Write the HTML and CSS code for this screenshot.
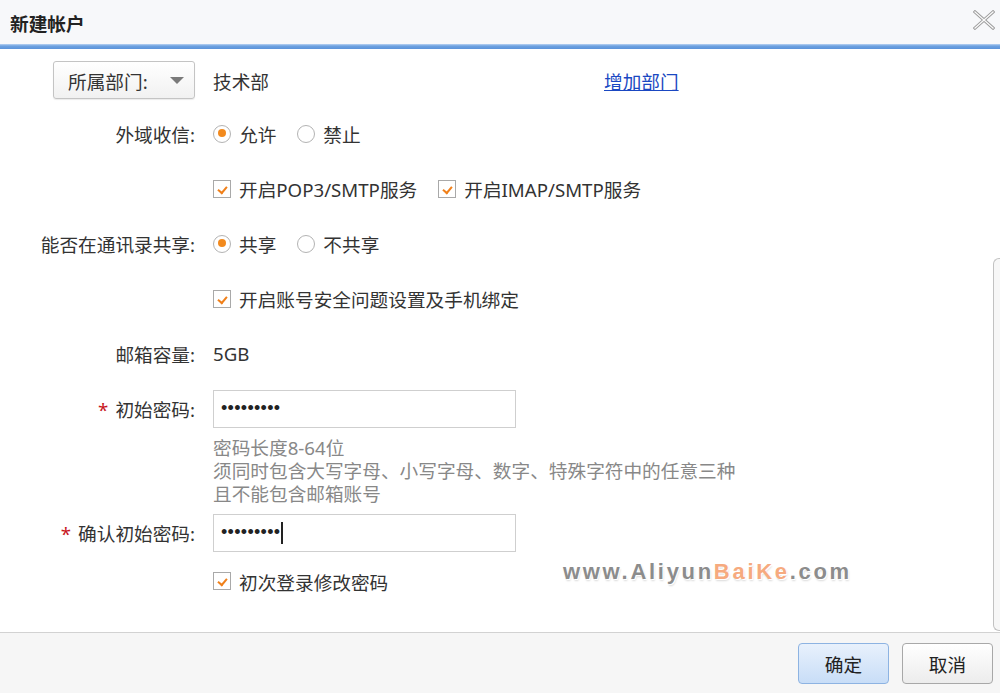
FILE: index.html
```html
<!DOCTYPE html>
<html lang="zh-CN">
<head>
    <meta charset="UTF-8">
    <title>新建帐户</title>
    <link rel="stylesheet" href="styles.css">
</head>
<body>
    <div class="dialog">
        <div class="dialog-header">
            <h1 class="dialog-title">新建帐户</h1>
            <svg class="close-icon" width="22" height="20" viewBox="0 0 22 20">
                <path d="M2 2 L20 18 M20 2 L2 18" stroke="#9a9a9a" stroke-width="3.2" stroke-linecap="square" fill="none"/>
                <path d="M2 2 L20 18 M20 2 L2 18" stroke="#fafafa" stroke-width="1.3" stroke-linecap="square" fill="none"/>
            </svg>
        </div>
        <div class="header-line"></div>

        <div class="dialog-body">
            <div class="row row-first">
                <div class="label-col">
                    <div class="dept-select">
                        <span>所属部门:</span>
                        <span class="caret"></span>
                    </div>
                </div>
                <div class="value-col">
                    <span class="dept-name">技术部</span>
                    <a href="#" class="link">增加部门</a>
                </div>
            </div>

            <div class="row">
                <div class="label-col">外域收信:</div>
                <div class="value-col">
                    <label class="option"><span class="radio checked"></span>允许</label>
                    <label class="option"><span class="radio"></span>禁止</label>
                </div>
            </div>

            <div class="row">
                <div class="label-col"></div>
                <div class="value-col">
                    <label class="option"><span class="checkbox"></span>开启POP3/SMTP服务</label>
                    <label class="option"><span class="checkbox"></span>开启IMAP/SMTP服务</label>
                </div>
            </div>

            <div class="row">
                <div class="label-col">能否在通讯录共享:</div>
                <div class="value-col">
                    <label class="option"><span class="radio checked"></span>共享</label>
                    <label class="option"><span class="radio"></span>不共享</label>
                </div>
            </div>

            <div class="row">
                <div class="label-col"></div>
                <div class="value-col">
                    <label class="option"><span class="checkbox"></span>开启账号安全问题设置及手机绑定</label>
                </div>
            </div>

            <div class="row">
                <div class="label-col">邮箱容量:</div>
                <div class="value-col">5GB</div>
            </div>

            <div class="row">
                <div class="label-col"><span class="required">*</span>初始密码:</div>
                <div class="value-col">
                    <div class="text-input"><span class="dots">•••••••••</span></div>
                </div>
            </div>

            <div class="hint">
                <p>密码长度8-64位</p>
                <p>须同时包含大写字母、小写字母、数字、特殊字符中的任意三种</p>
                <p>且不能包含邮箱账号</p>
            </div>

            <div class="row">
                <div class="label-col"><span class="required">*</span>确认初始密码:</div>
                <div class="value-col">
                    <div class="text-input"><span class="dots">•••••••••</span><span class="text-caret"></span></div>
                </div>
            </div>

            <div class="row row-last">
                <div class="label-col"></div>
                <div class="value-col">
                    <label class="option"><span class="checkbox"></span>初次登录修改密码</label>
                </div>
            </div>

            <div class="watermark">www.Aliyun<span class="wm-accent">BaiKe</span>.com</div>
            <div class="scroll-thumb"></div>
        </div>

        <div class="dialog-footer">
            <button class="btn btn-primary">确定</button>
            <button class="btn">取消</button>
        </div>
    </div>
</body>
</html>
```

FILE: styles.css
```css
* {
    margin: 0;
    padding: 0;
    box-sizing: border-box;
}

body {
    font-family: "Noto Sans", "Noto Sans CJK SC", sans-serif;
    font-size: 18.67px;
    color: #333;
    background: #fff;
    width: 1000px;
    height: 693px;
    overflow: hidden;
}

.dialog {
    display: flex;
    flex-direction: column;
    height: 693px;
}

.dialog-header {
    height: 44px;
    background: #f7f8fa;
    display: flex;
    align-items: center;
    justify-content: space-between;
    padding: 0 5px 0 10px;
}

.dialog-title {
    font-size: 18.67px;
    font-weight: bold;
    color: #222;
    font-family: "Noto Sans CJK SC", sans-serif;
}

.close-icon {
    margin-top: -4px;
}

.header-line {
    height: 5px;
    background: linear-gradient(to bottom, #b9d3f2 0%, #6ea2e0 40%, #5b93da 100%);
}

.dialog-body {
    position: relative;
    height: 583px;
    padding-top: 12px;
    overflow: hidden;
}

.row {
    display: grid;
    grid-template-columns: 195px 1fr;
    column-gap: 18px;
    height: 55px;
    align-items: center;
}

.row-first {
    height: 38px;
    margin-bottom: 7px;
}

.row-last {
    height: 42px;
}

.label-col {
    text-align: right;
    white-space: nowrap;
}

.value-col {
    display: flex;
    align-items: center;
    white-space: nowrap;
}

.dept-select {
    display: inline-flex;
    align-items: center;
    justify-content: space-between;
    width: 142px;
    height: 38px;
    padding: 0 10px 0 14px;
    border: 1px solid #c4c4c4;
    border-radius: 3px;
    background: linear-gradient(to bottom, #ffffff 0%, #f1f1f1 100%);
    box-shadow: 0 1px 1px rgba(0, 0, 0, 0.08);
}

.caret {
    width: 0;
    height: 0;
    border-left: 7px solid transparent;
    border-right: 7px solid transparent;
    border-top: 7px solid #7a7a7a;
}

.dept-name {
    width: 391px;
}

.link {
    color: #1a48c2;
    text-decoration: underline;
}

.option {
    display: inline-flex;
    align-items: center;
    margin-right: 21px;
}

.radio {
    position: relative;
    width: 18px;
    height: 18px;
    margin-right: 8px;
    border: 1.5px solid #b3b3b3;
    border-radius: 50%;
    background: #fff;
}

.radio.checked::after {
    content: "";
    position: absolute;
    left: 3.5px;
    top: 3.5px;
    width: 8px;
    height: 8px;
    border-radius: 50%;
    background: #f28a1e;
}

.checkbox {
    position: relative;
    width: 18px;
    height: 18px;
    margin-right: 8px;
    border: 1.5px solid #a9a9a9;
    background: #fff;
}

.checkbox::after {
    content: "";
    position: absolute;
    left: 4px;
    top: 2px;
    width: 7px;
    height: 4px;
    border-left: 2.5px solid #f0801a;
    border-bottom: 2.5px solid #f0801a;
    transform: translate(0, 3px) rotate(-50deg);
}

.required {
    color: #c8161d;
    margin-right: 7px;
}

.text-input {
    display: flex;
    align-items: center;
    width: 303px;
    height: 38px;
    padding-left: 7px;
    border: 1.5px solid #cfcfcf;
    background: #fff;
}

.dots {
    font-family: "Liberation Sans", sans-serif;
    font-size: 18px;
    letter-spacing: 0.3px;
    color: #222;
}

.text-caret {
    width: 2px;
    height: 22px;
    margin-left: 1px;
    background: #222;
}

.hint {
    padding-left: 213px;
    color: #888;
    line-height: 23px;
}

.watermark {
    position: absolute;
    left: 563px;
    top: 510px;
    font-family: "Liberation Sans", sans-serif;
    font-size: 22px;
    font-weight: bold;
    letter-spacing: 2.7px;
    color: #8c8c8c;
    text-shadow: 1px 1px 0 #fff, -1px -1px 0 #fff, 1px 2px 2px rgba(0, 0, 0, 0.15);
}

.wm-accent {
    color: #f6aa7f;
}

.scroll-thumb {
    position: absolute;
    right: 0;
    top: 209px;
    width: 7px;
    height: 373px;
    border: 1.5px solid #c2c2c2;
    border-right: none;
    border-radius: 6px 0 0 6px;
    background: #f7f7f7;
}

.dialog-footer {
    flex: 1;
    display: flex;
    justify-content: flex-end;
    gap: 13px;
    padding: 10px 7px 0 0;
    border-top: 1px solid #d2d2d2;
    background: #f6f6f6;
}

.btn {
    width: 91px;
    height: 41px;
    font-family: "Noto Sans CJK SC", sans-serif;
    font-size: 18.67px;
    color: #222;
    border: 1px solid #a8a8a8;
    border-radius: 4px;
    background: linear-gradient(to bottom, #ffffff 0%, #ececec 100%);
}

.btn-primary {
    border-color: #8db3e2;
    background: linear-gradient(to bottom, #e8f1fc 0%, #c8ddf7 100%);
}
```
